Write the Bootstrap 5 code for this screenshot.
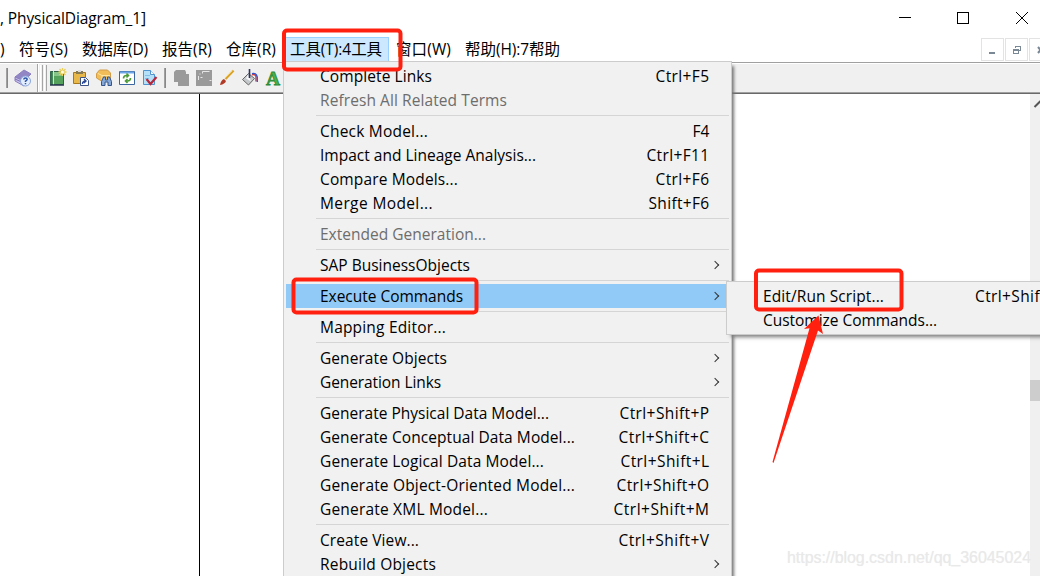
<!DOCTYPE html>
<html lang="zh">
<head>
<meta charset="utf-8">
<title>PhysicalDiagram_1</title>
<link href="https://cdn.jsdelivr.net/npm/bootstrap@5.3.0/dist/css/bootstrap.min.css" rel="stylesheet">
<style>
body{width:1040px;height:576px;font:15.5px/24px "Open Sans","Noto Sans CJK SC",sans-serif;color:#000;background:#fff}
.fit{display:inline-block;white-space:pre}
.title-row{height:38px;padding-left:0}
.title-row>.fit{line-height:36px}
.win-btns{margin-right:10px}
.menu-row{height:24px;font-family:"Open Sans","Noto Sans CJK SC",sans-serif}
.menu-row .entry{height:25px;line-height:22px;margin-right:14px;flex:none}
.menu-row .open{background:#cce8ff;border:1px solid #99d1ff;width:104px;padding-left:4px;margin:-1px 7px 0 -5px;line-height:22px}
.mdi{gap:1px;margin-right:-12px}
.mdi span{width:23px;height:23px;border:1px solid #e3e3e3;display:block}
.mdi svg{display:block}
.tool-row{height:32px;background:#f0f0f0;border-top:1px solid #a0a0a0;border-bottom:1px solid #696969;box-shadow:inset 0 1px #fff,inset 0 -1px #a0a0a0}
.tool-row svg{flex:none}
.pane-left{width:200px;border-right:1px solid #000}
.scroller{width:10px;background:#f0f0f0}
.thumb{height:21px;margin-top:274px;background:#cdcdcd}
.popup{border:1px solid #ccc;background:#f1f1f1;padding:2px;box-shadow:4px 3px 4px -1px #777}
#tools{left:283px;top:61px;width:449px;height:530px;box-shadow:3px 4px 3px -1px #777}
#commands{left:726px;top:281px;width:350px;height:54px}
.cmd{height:24px;line-height:25px;padding:0 19.5px 0 34px;position:relative}
.cmd.dim{color:#6d6d6d}
.cmd.hot{background:#91c9f7}
.cmd.sub::after{content:"";width:6px;height:6px;border:solid #333;border-width:1.3px 1.3px 0 0;transform:rotate(45deg);position:absolute;right:11.5px;top:9px}
.rule{height:1px;margin:3px 0 3px 30px;background:#d5d5d5}
.far-key{margin-left:91px}
.stamp{right:9px;bottom:6px;font:16px/24px "Liberation Sans",sans-serif;color:#e9e9e9;text-shadow:0 0 1px #eee}
</style>
</head>
<body class="position-relative overflow-hidden d-flex flex-column">
<header class="title-row d-flex justify-content-between">
  <span class="fit" data-w="146">, PhysicalDiagram_1]</span>
  <svg class="win-btns" width="132" height="36" fill="none" stroke="#000" shape-rendering="crispEdges"><path d="M1 17.5h12M59.5 12.5h11v11h-11z"/><path shape-rendering="auto" d="M118 12l12 12M130 12l-12 12"/></svg>
</header>
<nav class="menu-row d-flex">
  <span class="entry fit" data-w="5">)</span>
  <span class="entry fit" data-w="49">符号(S)</span>
  <span class="entry fit" data-w="66">数据库(D)</span>
  <span class="entry fit" data-w="50">报告(R)</span>
  <span class="entry fit" data-w="50">仓库(R)</span>
  <span class="entry open"><span class="fit" data-w="92">工具(T):4工具</span></span>
  <span class="entry fit" data-w="55">窗口(W)</span>
  <span class="entry fit" data-w="95">帮助(H):7帮助</span>
  <div class="mdi d-flex ms-auto">
    <span><svg width="21" height="21"><path d="M7 13h6v2H7z" fill="#7a8794"/></svg></span>
    <span><svg width="21" height="21" fill="none" stroke="#7a8794" shape-rendering="crispEdges"><path d="M9.5 9V7.500h5v4H13M9 7h6M7.500 10.500h5v4h-5zM7 11h6"/></svg></span>
    <span><svg width="21" height="21"><path d="M8 8l5 6M13 8l-5 6" stroke="#7a8794" stroke-width="2"/></svg></span>
  </div>
</nav>
<div class="tool-row d-flex">
<svg width="284" height="29" fill="none">
  <g shape-rendering="crispEdges">
    <path d="M6.500 5v20M164.500 5v20" stroke="#a0a0a0"/><path d="M7.500 5v20M165.500 5v20" stroke="#888"/>
    <path d="M37.500 1v28M42.500 2v26M46.500 2v26" stroke="#a5a5a5"/><path d="M38.500 1v28M40.500 2v26M44.500 2v26" stroke="#fff"/>
  </g>
  <!-- help book -->
  <path d="M15 14l9-7 7 4-7 7z" fill="#9386c4" stroke="#8a7dc0"/><path d="M15 14l9 4v5l-9-5z" fill="#c9c2e8" stroke="#8a7dc0"/><path d="M15 16l9 4" stroke="#7d70b5"/>
  <circle cx="25.500" cy="18" r="5" fill="#e4eeff" stroke="#8aa6dc"/><path d="M23.800 16.600q0-1.700 1.700-1.700t1.700 1.400q0 1-1.700 1.900v.9m0 1v1.200" stroke="#2a55a8" stroke-width="1.500"/>
  <!-- new model -->
  <path d="M50.500 8.500h13v13h-13z" fill="#55a25c" stroke="#2f5f48"/><path d="M54 9h9v4h-9z" fill="#86c48a"/><path d="M53.500 8v14" stroke="#cfe6d0"/><path d="M50 22h14" stroke="#2a3a50" stroke-width="1.500"/><path d="M51.500 9v12" stroke="#3c7258" stroke-width="2"/>
  <path d="M62.500 5v8M58.500 9h8M59.500 6l6 6M65.500 6l-6 6" stroke="#e9d05c" stroke-width="1.300"/><circle cx="62.500" cy="9" r="1.500" fill="#fffbe0"/>
  <!-- paste shortcut -->
  <path d="M73.500 9.500h12v11h-12z" fill="#e8b94a" stroke="#a8771c"/><path d="M76 8h7v3h-7z" fill="#8a7a50"/><path d="M78 7h3v2h-3z" fill="#ddd"/><path d="M80.500 14.500h5l3 3v5h-8z" fill="#fff" stroke="#3c5488"/><path d="M82.500 21q0-3 3.500-3m-2-2l2 2-2 2" stroke="#2a4a98" stroke-width="1.400"/>
  <!-- find objects -->
  <path d="M96.500 10.500l3-3.500h8l3 3v8h-9l-5-3z" fill="#f0bd58" stroke="#d39c48"/><path d="M98 10.500l4 2h8M102 12.500v6" stroke="#ffe6a0"/><path d="M101.500 22.500v-4l2-4.500h2v3h2v-3h2l2 4.500v4h-3.500v-3.500h-3v3.500z" fill="#86a8d6" stroke="#34548a"/>
  <!-- refresh -->
  <path d="M119.500 8.500h15v13h-15z" fill="#fff" stroke="#3c66a0"/><path d="M120 9.500h14" stroke="#6ea6e8" stroke-width="2"/><path d="M123.500 15.500q0-3 3-3h2m-2-2l2 2-2 2M130.500 15q0 3-3 3h-2m2-2l-2 2 2 2" stroke="#4c9a38" stroke-width="1.600"/>
  <!-- check page -->
  <path d="M143.500 7.500h7l4 4v10h-11z" fill="#b6e0f8" stroke="#4f94cf"/><path d="M150.500 7.500v4h4" fill="#fff" stroke="#4f94cf"/><path d="M145 12.500h5M145 15.500h4" stroke="#84bfe6"/><path d="M146.500 16l4 5 6-7" stroke="#b8283c" stroke-width="2.200"/>
  <!-- disabled pair -->
  <path d="M174 9l2-2h9l1 2v2h3v12h-11v-4h-4z" fill="#9a9a9a"/><path d="M196 7h16v16h-16z" fill="#9a9a9a"/><path d="M198.500 17v-4m1-2h1m9-2.500h-7v2m-2 4h2m7 3h2" stroke="#e6e6e6"/>
  <!-- brush -->
  <path d="M225.500 16l8-8.500" stroke="#d9a128" stroke-width="2.400"/><path d="M225 15l7.500-7.500" stroke="#f6d678"/><path d="M220 22q1-5 4-6l2 2q-1 3-6 4z" fill="#b03a25"/>
  <!-- bucket -->
  <path d="M242.500 16.500l6-6 6 5-6 6.500z" fill="#c4c8ca" stroke="#666"/><path d="M248 11.500l3 7-5-3" fill="#f7f7f7"/><path d="M249.500 6v9" stroke="#2c3560" stroke-width="1.600"/><path d="M252 12q2.500-1.500 4 1.500v5" stroke="#e03126" stroke-width="1.400"/><path d="M252 10.700q4-1.200 5.300 3.300v5" stroke="#2f56d1" stroke-width="1.300"/>
  <text x="266" y="21.500" font-family="Liberation Serif" font-weight="bold" font-size="18" textLength="14" lengthAdjust="spacingAndGlyphs" fill="#4ab14a" stroke="#2c8a38" stroke-width=".8">A</text>
</svg>
</div>
<main class="d-flex flex-grow-1">
  <div class="pane-left"></div>
  <div class="flex-grow-1"></div>
  <div class="scroller"><svg class="position-absolute" width="10" height="16"><path d="M4.500 13l6-6" stroke="#555" stroke-width="2"/></svg><div style="height:12px"></div><div class="thumb"></div></div>
</main>

<div id="tools" class="popup position-absolute">
  <div class="cmd d-flex justify-content-between"><span class="fit" data-w="112">Complete Links</span><span class="fit" data-w="54">Ctrl+F5</span></div>
  <div class="cmd dim"><span class="fit" data-w="187">Refresh All Related Terms</span></div>
  <div class="rule"></div>
  <div class="cmd d-flex justify-content-between"><span class="fit" data-w="108">Check Model...</span><span class="fit" data-w="17">F4</span></div>
  <div class="cmd d-flex justify-content-between"><span class="fit" data-w="216">Impact and Lineage Analysis...</span><span class="fit" data-w="63">Ctrl+F11</span></div>
  <div class="cmd d-flex justify-content-between"><span class="fit" data-w="138">Compare Models...</span><span class="fit" data-w="54">Ctrl+F6</span></div>
  <div class="cmd d-flex justify-content-between"><span class="fit" data-w="113">Merge Model...</span><span class="fit" data-w="61">Shift+F6</span></div>
  <div class="rule"></div>
  <div class="cmd dim"><span class="fit" data-w="166">Extended Generation...</span></div>
  <div class="rule"></div>
  <div class="cmd sub"><span class="fit" data-w="150">SAP BusinessObjects</span></div>
  <div class="rule"></div>
  <div class="cmd sub hot"><span class="fit" data-w="143">Execute Commands</span></div>
  <div class="rule"></div>
  <div class="cmd"><span class="fit" data-w="126">Mapping Editor...</span></div>
  <div class="rule"></div>
  <div class="cmd sub"><span class="fit" data-w="127">Generate Objects</span></div>
  <div class="cmd sub"><span class="fit" data-w="121">Generation Links</span></div>
  <div class="rule"></div>
  <div class="cmd d-flex justify-content-between"><span class="fit" data-w="229">Generate Physical Data Model...</span><span class="fit" data-w="90">Ctrl+Shift+P</span></div>
  <div class="cmd d-flex justify-content-between"><span class="fit" data-w="255">Generate Conceptual Data Model...</span><span class="fit" data-w="91">Ctrl+Shift+C</span></div>
  <div class="cmd d-flex justify-content-between"><span class="fit" data-w="224">Generate Logical Data Model...</span><span class="fit" data-w="89">Ctrl+Shift+L</span></div>
  <div class="cmd d-flex justify-content-between"><span class="fit" data-w="255">Generate Object-Oriented Model...</span><span class="fit" data-w="93">Ctrl+Shift+O</span></div>
  <div class="cmd d-flex justify-content-between"><span class="fit" data-w="168">Generate XML Model...</span><span class="fit" data-w="96">Ctrl+Shift+M</span></div>
  <div class="rule"></div>
  <div class="cmd d-flex justify-content-between"><span class="fit" data-w="99">Create View...</span><span class="fit" data-w="91">Ctrl+Shift+V</span></div>
  <div class="cmd sub"><span class="fit" data-w="116">Rebuild Objects</span></div>
</div>

<div id="commands" class="popup position-absolute">
  <div class="cmd d-flex"><span class="fit" data-w="121">Edit/Run Script...</span><span class="fit far-key" data-w="65">Ctrl+Shif</span></div>
  <div class="cmd"><span class="fit" data-w="174">Customize Commands...</span></div>
</div>

<div class="stamp position-absolute"><span class="fit" data-w="244">https://blog.csdn.net/qq_36045024</span></div>

<!-- hand-drawn call-outs -->
<svg class="position-absolute top-0 start-0" width="1040" height="576" fill="none" stroke="#ff2010" stroke-width="4">
  <rect x="284" y="30.500" width="116.500" height="39" rx="3"/>
  <rect x="293.500" y="279.500" width="183" height="33" rx="3"/>
  <rect x="756" y="270.500" width="145.500" height="39" rx="3"/>
  <path d="M818.500 315.500L804 329l5.500-.8L772.500 462l1 1L818 330.500l5 3.500z" fill="#ff2010" stroke="none"/>
</svg>
<script src="https://cdn.jsdelivr.net/npm/bootstrap@5.3.0/dist/js/bootstrap.bundle.min.js"></script>
<script>
// Space each label's letters so that it takes the width given for it
document.querySelectorAll('.fit').forEach(el => {
  const w = +el.dataset.w, n = el.textContent.length;
  const gap = (w - el.getBoundingClientRect().width) / n;
  el.style.letterSpacing = gap.toFixed(3) + 'px';
  el.style.width = w + 'px';
});
</script>
</body>
</html>
